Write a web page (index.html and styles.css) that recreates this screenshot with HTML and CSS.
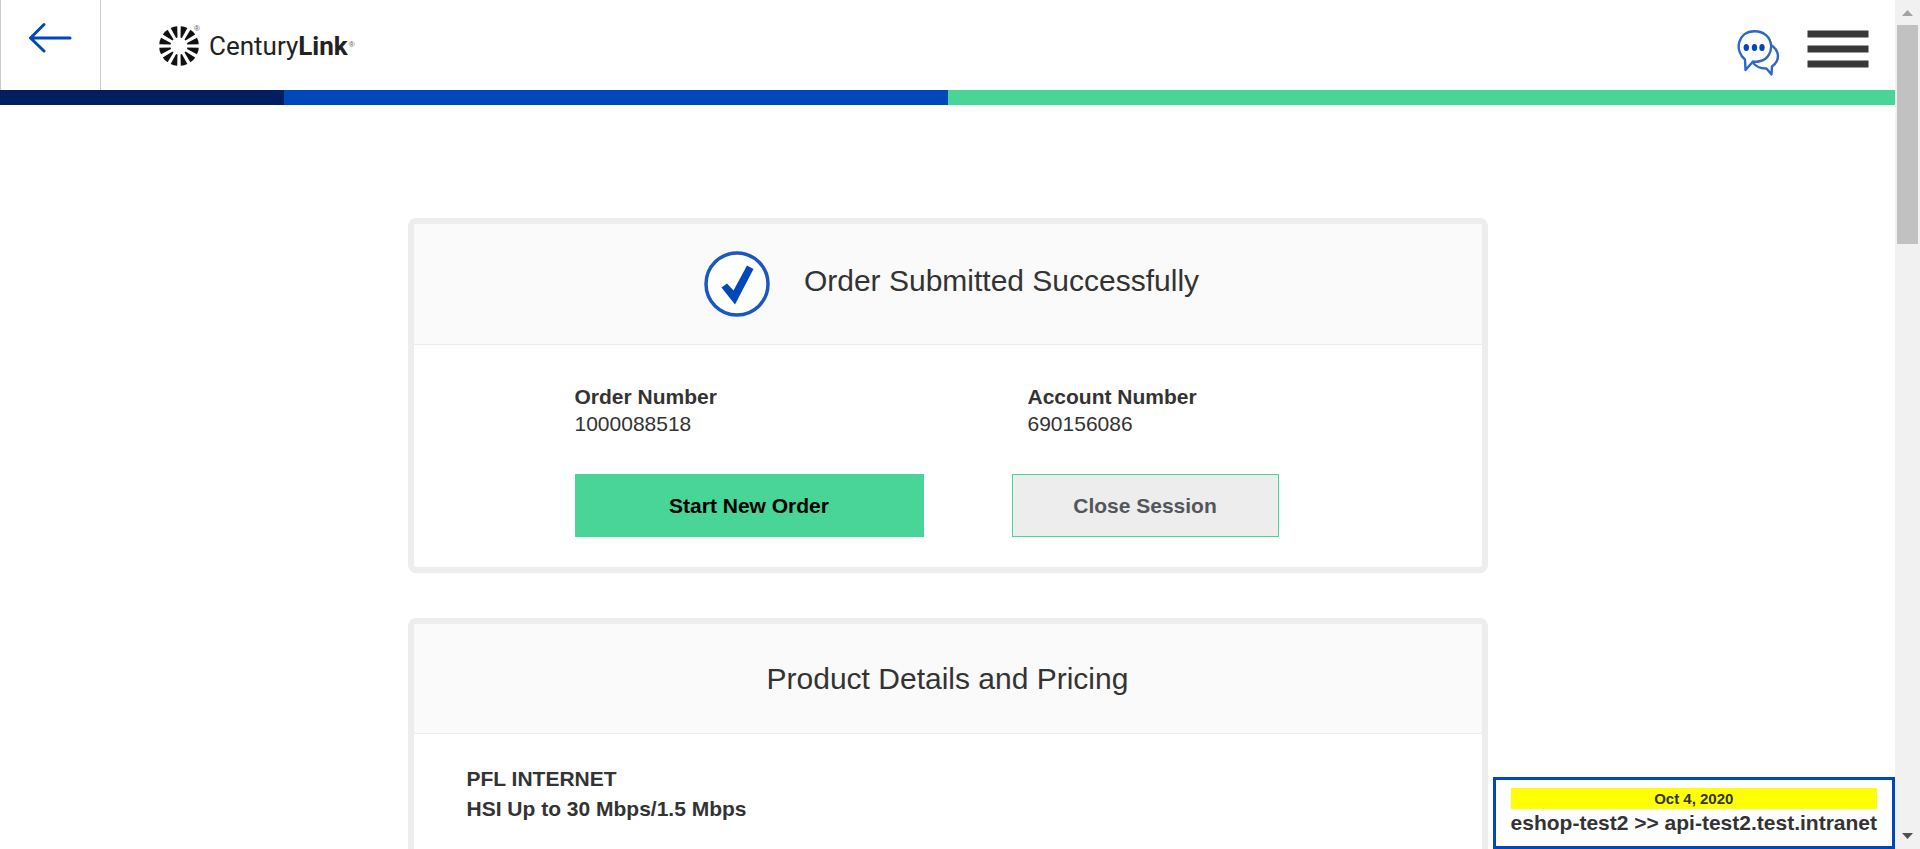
FILE: index.html
```
<!DOCTYPE html>
<html lang="en">
<head>
<meta charset="utf-8">
<title>Order Submitted</title>
<link rel="stylesheet" href="styles.css">
</head>
<body>
<div class="window">
  <div class="page">
    <header class="header">
      <button class="back" type="button" aria-label="Back">
        <svg width="44" height="32" viewBox="0 0 44 32" fill="none" stroke="#0047bb" stroke-width="3" stroke-linecap="round" stroke-linejoin="round"><path d="M41 16H2M15 2.500L1.500 16L15 29"/></svg>
      </button>
      <a class="logo" href="#" aria-label="CenturyLink">
        <svg width="42" height="42" viewBox="-21 -21 42 42">
          <defs><path id="ray" d="M-.700-8.500L-3.400-19.500Q0-20.400 3.400-19.500L.700-8.500Z"/></defs>
          <g id="quarter" transform="rotate(15)">
            <use href="#ray"/><use href="#ray" transform="rotate(30)"/><use href="#ray" transform="rotate(60)"/>
          </g>
          <use href="#quarter" transform="rotate(90)"/><use href="#quarter" transform="rotate(180)"/><use href="#quarter" transform="rotate(270)"/>
        </svg>
        <span class="mark">®</span>
        <span class="wordmark">Century<b>Link</b></span>
        <span class="mark mark-end">®</span>
      </a>
      <div class="tools">
        <button class="tool" type="button" aria-label="Chat">
          <svg width="44" height="48" viewBox="0 0 44 48" fill="none" stroke="#2e68c4" stroke-width="2.400" stroke-linejoin="round"><path d="M34 15C42 20 44 30 35 36.500L34.500 44.500L29.500 38.500C23 39 19 36 16 33"/><path d="M8 29.500C-3 21 .500 1.200 17.500 1.200C38 1.200 39 27 23.500 31C20 32 18 32 16 31.500L8.500 40Z" fill="#fff"/><g fill="#0047bb" stroke="none"><ellipse cx="9.300" cy="17.500" rx="2.700" ry="3.500"/><ellipse cx="17.500" cy="17.500" rx="2.700" ry="3.500"/><ellipse cx="25" cy="17.500" rx="2.700" ry="3.500"/></g></svg>
        </button>
        <button class="tool" type="button" aria-label="Menu">
          <svg width="62" height="38" viewBox="0 0 62 38" fill="#383838"><path d="M.500.500h61v7h-61zM.500 15.500h61v7h-61zM.500 30.500h61v7h-61z"/></svg>
        </button>
      </div>
    </header>
    <div class="stripe"><span class="navy"></span><span class="blue"></span><span class="green"></span></div>
    <main class="content">
      <section class="card">
        <div class="card-head confirm">
          <svg width="66" height="66" viewBox="0 0 66 66"><circle cx="33" cy="33" r="31" fill="#fff" stroke="#1a57c0" stroke-width="3.500"/><path d="M17.500 36.500L23 32.500L29.500 39.500L43 14.500L49.500 18L31 53.500Z" fill="#0047bb"/></svg>
          <h1 class="title">Order Submitted Successfully</h1>
        </div>
        <div class="order">
          <dl class="numbers">
            <div class="number"><dt>Order Number</dt><dd>1000088518</dd></div>
            <div class="number"><dt>Account Number</dt><dd>690156086</dd></div>
          </dl>
          <div class="actions">
            <button class="btn primary" type="button">Start New Order</button>
            <button class="btn secondary" type="button">Close Session</button>
          </div>
        </div>
      </section>
      <section class="card">
        <div class="card-head"><h2 class="title">Product Details and Pricing</h2></div>
        <div class="product">
          <p>PFL INTERNET</p>
          <p>HSI Up to 30 Mbps/1.5 Mbps</p>
        </div>
      </section>
    </main>
    <aside class="env">
      <div class="env-date">Oct 4, 2020</div>
      <div class="env-host">eshop-test2 &gt;&gt; api-test2.test.intranet</div>
    </aside>
  </div>
  <div class="scrollbar" aria-hidden="true">
    <svg width="11" height="6" viewBox="0 0 11 6" fill="#a3a3a3"><path d="M5.500 0L11 6H0Z"/></svg>
    <div class="track"><div class="thumb"></div></div>
    <svg width="11" height="6" viewBox="0 0 11 6" fill="#505050"><path d="M0 0H11L5.500 6Z"/></svg>
  </div>
</div>
</body>
</html>
```
FILE: styles.css
```
* { box-sizing: border-box; }
body, h1, h2, p, dl, dd { margin: 0; }
body {
  font-family: "Liberation Sans", Arial, sans-serif;
  font-size: 21px;
  line-height: 27px;
  color: #333;
  background: #fff;
}
button { font: inherit; border: 0; padding: 0; background: none; cursor: pointer; }
svg { display: block; flex: none; }
.window { display: grid; grid-template-columns: minmax(0, 1fr) 25px; height: 100vh; overflow: hidden; }
.page { position: relative; overflow: hidden; }

.header { display: flex; height: 90px; }
.back {
  display: flex;
  justify-content: center;
  width: 101px;
  padding-top: 22px;
  border: solid #ccc;
  border-width: 0 1px;
}
.logo { display: flex; align-items: flex-start; padding: 25px 0 0 57px; color: #222; text-decoration: none; }
.logo svg { fill: #111; }
.wordmark { font-family: Roboto, sans-serif; font-size: 26px; line-height: 42px; margin-left: 10px; }
.mark { width: 5px; font-size: 8px; line-height: 8px; margin-left: -6px; color: #555; }
.mark-end { margin: 16px 0 0 1px; }
.tools { display: flex; align-items: flex-start; gap: 26px; margin-left: auto; padding: 30px 26px 0 0; }

.stripe { display: flex; height: 15px; }
.navy { width: 15%; background: #001e60; }
.blue { width: 35%; background: #0047bb; }
.green { width: 50%; background: #48d597; }

.content { display: flex; flex-direction: column; gap: 45px; max-width: 1080px; margin: 0 auto; padding-top: 113px; }
.card { border: 6px solid #ededed; border-radius: 8px; }
.card-head {
  display: flex;
  align-items: center;
  justify-content: center;
  min-height: 110px;
  background: #fafafa;
  border-bottom: 1px solid #ebebeb;
}
.confirm { gap: 34px; min-height: 121px; padding-left: 8px; }
.title { font-size: 30px; line-height: 40px; font-weight: 400; }
.confirm .title { padding-bottom: 6px; }

.order { padding: 38px 161px 30px; }
.numbers { display: grid; grid-template-columns: 453px 1fr; }
.number dt { font-weight: 700; }
.actions { display: flex; gap: 88px; margin-top: 37px; }
.btn { height: 63px; font-weight: 700; }
.primary { width: 349px; background: #48d597; color: #000; }
.secondary { width: 267px; background: #ededed; border: 1px solid #48d597; color: #53565a; }

.product { padding: 30px 53px; line-height: 30px; font-weight: 700; min-height: 300px; }

.env {
  position: absolute;
  right: 0;
  bottom: 0;
  padding: 8px 15px 10px;
  border: 3px solid #0047bb;
  background: #fff;
  font-weight: 700;
  text-align: center;
}
.env-date { background: #ff0; font-size: 15px; line-height: 21px; }

.scrollbar { display: flex; flex-direction: column; align-items: center; padding: 10px 0; background: #f1f1f1; }
.track { flex: 1; width: 21px; padding: 9px 0; }
.thumb { height: 219px; background: #c1c1c1; }
```
